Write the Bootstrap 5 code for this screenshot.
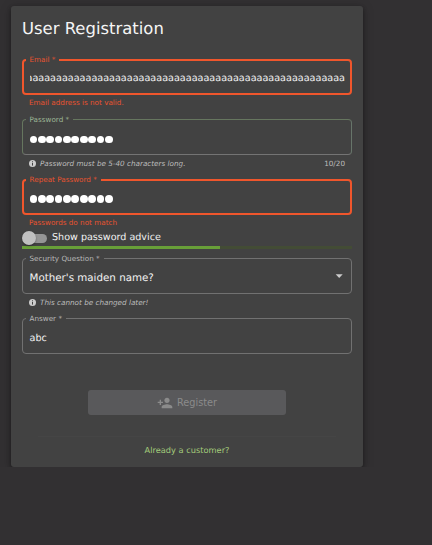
<!DOCTYPE html>
<html lang="en" data-bs-theme="dark">
<head>
<meta charset="utf-8">
<meta name="viewport" content="width=device-width, initial-scale=1">
<title>User Registration</title>
<link href="https://cdn.jsdelivr.net/npm/bootstrap@5.3.0/dist/css/bootstrap.min.css" rel="stylesheet">
<style>
  body { background: #323032; font: 9.65px/12px "DejaVu Sans", sans-serif; color: #f2f2f2; overflow: hidden; text-rendering: geometricPrecision; }
  .reg-card { width: 352px; height: 461px; margin: 6px 0 0 11px; background: #424242; border-radius: 3px;
    box-shadow: 0 2px 4px rgba(0,0,0,.32), 0 2px 11px rgba(0,0,0,.25); }
  .reg-body { padding: 11px; }
  .reg-title { font-size: 16.46px; line-height: 22px; color: #f5f5f5; padding-top: 1px; margin-bottom: 19px; }
  .field { height: 36px; border: 1px solid #717171; border-radius: 4px; padding: 5px 6px 0 6.5px; }
  .field.tinted { border-color: #66765f #67756a #747474 #66765f; }
  .field.invalid { border: 2px solid #f0562c; padding: 4px 5px 0 5.5px; }
  .field-label { top: -5px; left: 2.5px; padding: 0 4px; font-size: 7.23px; line-height: 10px; background: #424242; color: #b9b9b9; white-space: nowrap; }
  .invalid .field-label { top: -6px; left: 1.5px; color: #e9532f; }
  .tinted .field-label { color: #9db796; }
  .hint { height: 24px; padding: 3px 7px 0; font-size: 7.23px; line-height: 11px; color: #bdbdbd; }
  .hint.bad { color: #e9532f; padding-top: 2px; }
  .hint.short { height: 17px; }
  .dot { width: 7.8px; height: 7.8px; margin-right: .58px; border-radius: 50%; background: #fff; }
  .switch-track { width: 21px; height: 9px; margin-left: 4px; border-radius: 5px; background: #959595; }
  .switch-knob { width: 14px; height: 14px; left: -4px; top: -2.5px; background: #c0c0c0; box-shadow: 0 1px 2px rgba(0,0,0,.35); }
  .switch-text { font-size: 9.59px; margin-left: 5px; }
  .strength { height: 3px; margin: 2px 0 9px; border-radius: 0; background: #434c35; }
  .strength .progress-bar { background: #689f38; }
  .question { font-size: 10.31px; padding-bottom: 2px; }
  .reg-btn { width: 198px; height: 25px; margin-top: 36px; border-radius: 3px; background: #59595b; color: #8b8b8b; font-size: 9.72px; line-height: 12px; }
  .reg-rule { width: 298px; height: 1px; margin-top: 21px; background: #454545; }
  .login-link { font-size: 8.26px; line-height: 12px; color: #a3cb7b; margin-top: 7px; }
</style>
</head>
<body>
<main class="reg-card card border-0">
  <div class="reg-body card-body d-flex flex-column">
    <h1 class="reg-title fw-normal">User Registration</h1>

    <div class="field invalid position-relative d-flex align-items-center">
      <label class="field-label position-absolute">Email *</label>
      <div class="d-flex justify-content-end overflow-hidden w-100 text-nowrap"><span>aaaaaaaaaaaaaaaaaaaaaaaaaaaaaaaaaaaaaaaaaaaaaaaaaaaaaa</span></div>
    </div>
    <div class="hint bad">Email address is not valid.</div>

    <div class="field tinted position-relative d-flex align-items-center">
      <label class="field-label position-absolute">Password *</label>
      <span class="dot"></span><span class="dot"></span><span class="dot"></span><span class="dot"></span><span class="dot"></span><span class="dot"></span><span class="dot"></span><span class="dot"></span><span class="dot"></span><span class="dot"></span>
    </div>
    <div class="hint d-flex">
      <svg class="me-1" width="7" height="11" viewBox="0 0 7 11"><circle cx="3.5" cy="5.5" r="3.5" fill="#ccc"/><path d="M3.5 3.3v1M3.5 5v2.6" stroke="#424242"/></svg>
      <em>Password must be 5-40 characters long.</em><span class="ms-auto">10/20</span>
    </div>

    <div class="field invalid position-relative d-flex align-items-center">
      <label class="field-label position-absolute">Repeat Password *</label>
      <span class="dot"></span><span class="dot"></span><span class="dot"></span><span class="dot"></span><span class="dot"></span><span class="dot"></span><span class="dot"></span><span class="dot"></span><span class="dot"></span><span class="dot"></span>
    </div>
    <div class="hint bad short">Passwords do not match</div>

    <div class="d-flex align-items-center">
      <span class="switch-track position-relative"><span class="switch-knob position-absolute rounded-circle"></span></span>
      <span class="switch-text">Show password advice</span>
    </div>
    <div class="strength progress"><div class="progress-bar" style="width:60%"></div></div>

    <div class="field position-relative d-flex align-items-center">
      <label class="field-label position-absolute">Security Question *</label>
      <span class="question">Mother's maiden name?</span>
      <svg class="ms-auto" width="10" height="16" viewBox="0 0 10 16"><path d="M.7 3.3h7L4.2 7z" fill="#ccc"/></svg>
    </div>
    <div class="hint d-flex">
      <svg class="me-1" width="7" height="11" viewBox="0 0 7 11"><circle cx="3.5" cy="5.5" r="3.5" fill="#ccc"/><path d="M3.5 3.3v1M3.5 5v2.6" stroke="#424242"/></svg>
      <em>This cannot be changed later!</em>
    </div>

    <div class="field position-relative d-flex align-items-center">
      <label class="field-label position-absolute">Answer *</label>
      <span>abc</span>
    </div>

    <button class="reg-btn btn border-0 p-0 d-flex align-items-center justify-content-center align-self-center" type="button">
      <svg class="me-1" width="16" height="16" viewBox="0 0 24 24" fill="currentColor"><path d="M15 12c2.21 0 4-1.79 4-4s-1.79-4-4-4-4 1.79-4 4 1.79 4 4 4zm-9-2V7H4v3H1v2h3v3h2v-3h3v-2H6zm9 4c-2.67 0-8 1.34-8 4v2h16v-2c0-2.66-5.33-4-8-4z"/></svg>
      Register
    </button>
    <div class="reg-rule align-self-center"></div>
    <a class="login-link text-decoration-none align-self-center" href="#">Already a customer?</a>
  </div>
</main>
<script src="https://cdn.jsdelivr.net/npm/bootstrap@5.3.0/dist/js/bootstrap.bundle.min.js"></script>
</body>
</html>
